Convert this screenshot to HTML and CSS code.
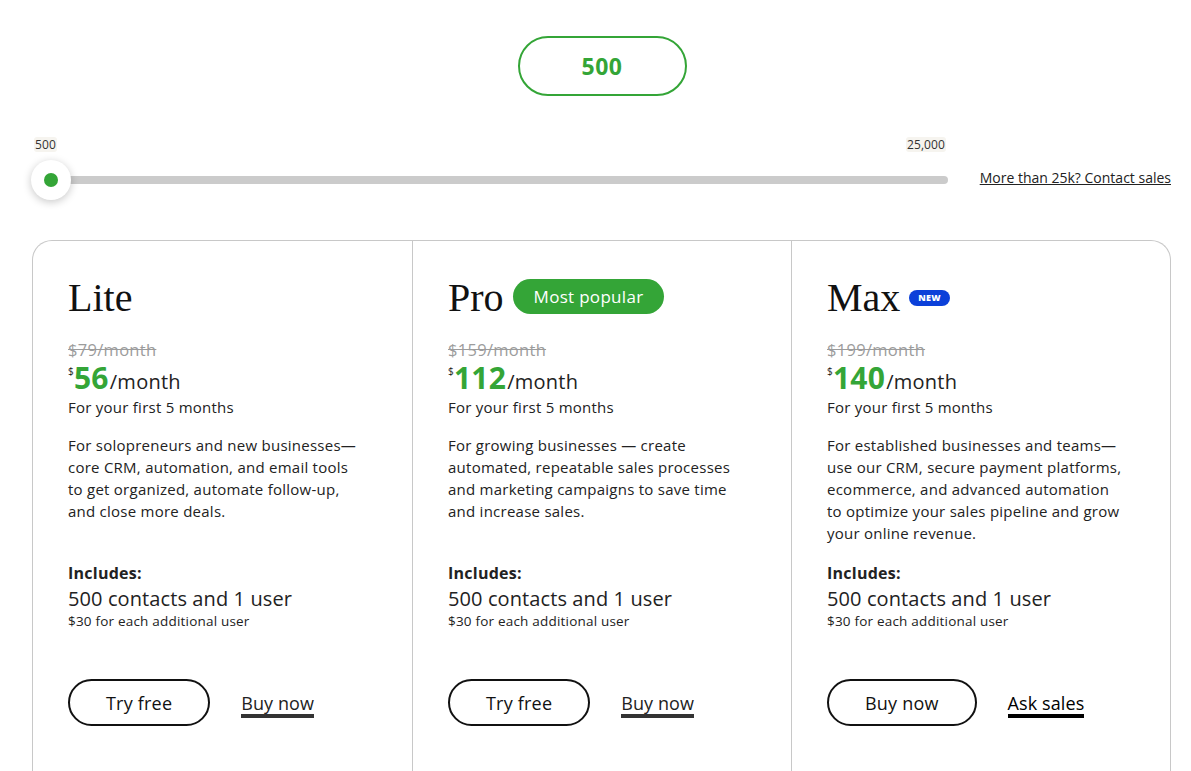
FILE: index.html
```html
<!doctype html>
<html>
<head>
  <meta charset="utf-8">
  <link rel="stylesheet" href="styles.css">
</head>
<body>
  <div class="page">
    <div class="countWrap">
      <div class="count">500</div>
    </div>

    <div class="sliderRow">
      <div class="slider">
        <div class="ends">
          <span class="endLabel">500</span>
          <span class="endLabel">25,000</span>
        </div>
        <div class="track">
          <div class="knob"><span class="dot"></span></div>
        </div>
      </div>
      <a href="#" class="contact">More than 25k? Contact sales</a>
    </div>

    <div class="plans">
      <div class="plan">
        <div class="titleRow"><h2 class="name">Lite</h2></div>
        <div class="oldPrice">$79/month</div>
        <div class="price"><sup>$</sup><b>56</b>/month</div>
        <div class="note">For your first 5 months</div>
        <p class="desc">For solopreneurs and new businesses—<br>core CRM, automation, and email tools<br>to get organized, automate follow-up,<br>and close more deals.</p>
        <div class="incTitle">Includes:</div>
        <div class="incMain">500 contacts and 1 user</div>
        <div class="incSub">$30 for each additional user</div>
        <div class="actions">
          <a href="#" class="btn">Try free</a>
          <a href="#" class="textLink">Buy now</a>
        </div>
      </div>

      <div class="plan">
        <div class="titleRow"><h2 class="name">Pro</h2><span class="popular">Most popular</span></div>
        <div class="oldPrice">$159/month</div>
        <div class="price"><sup>$</sup><b>112</b>/month</div>
        <div class="note">For your first 5 months</div>
        <p class="desc">For growing businesses — create<br>automated, repeatable sales processes<br>and marketing campaigns to save time<br>and increase sales.</p>
        <div class="incTitle">Includes:</div>
        <div class="incMain">500 contacts and 1 user</div>
        <div class="incSub">$30 for each additional user</div>
        <div class="actions">
          <a href="#" class="btn">Try free</a>
          <a href="#" class="textLink">Buy now</a>
        </div>
      </div>

      <div class="plan">
        <div class="titleRow"><h2 class="name">Max</h2><span class="new">NEW</span></div>
        <div class="oldPrice">$199/month</div>
        <div class="price"><sup>$</sup><b>140</b>/month</div>
        <div class="note">For your first 5 months</div>
        <p class="desc">For established businesses and teams—<br>use our CRM, secure payment platforms,<br>ecommerce, and advanced automation<br>to optimize your sales pipeline and grow<br>your online revenue.</p>
        <div class="incTitle">Includes:</div>
        <div class="incMain">500 contacts and 1 user</div>
        <div class="incSub">$30 for each additional user</div>
        <div class="actions">
          <a href="#" class="btn">Buy now</a>
          <a href="#" class="textLink dark">Ask sales</a>
        </div>
      </div>
    </div>
  </div>
</body>
</html>
```

FILE: styles.css
```css
body{
  margin: 0;
  background: #fff;
  color: #222;
  font-family: "Open Sans", "Noto Sans", sans-serif;
  letter-spacing: 0.25px;
}
.page{
  padding: 36px 20px 0 32px;
}
.countWrap{
  display: flex;
  justify-content: center;
  padding-left: 1px;
}
.count{
  width: 165px;
  height: 56px;
  border: 2px solid #34a537;
  border-radius: 30px;
  display: flex;
  align-items: center;
  justify-content: center;
  color: #34a537;
  font-size: 23px;
  font-weight: 700;
  letter-spacing: 0.5px;
}
.sliderRow{
  display: flex;
  align-items: flex-end;
  margin-top: 41px;
}
.slider{
  width: 916px;
}
.ends{
  display: flex;
  justify-content: space-between;
  padding: 0 2px 0 2px;
}
.endLabel{
  background: #f6f4ef;
  border-radius: 3px;
  font-size: 12px;
  line-height: 15px;
  color: #333;
  padding: 0 1px;
  letter-spacing: 0.1px;
}
.track{
  position: relative;
  height: 8px;
  margin-top: 24px;
  margin-left: 14px;
  background: #cbcbcb;
  border-radius: 4px;
}
.knob{
  position: absolute;
  left: -15px;
  top: -16px;
  width: 40px;
  height: 40px;
  border-radius: 50%;
  background: #fff;
  box-shadow: 0 2px 8px rgba(0,0,0,0.22);
  display: flex;
  align-items: center;
  justify-content: center;
}
.dot{
  width: 14px;
  height: 14px;
  border-radius: 50%;
  background: #34a537;
}
.contact{
  margin-left: auto;
  font-size: 14px;
  line-height: 18px;
  color: #222;
  text-decoration: underline;
  margin-bottom: -3px;
  letter-spacing: 0;
}
.plans{
  margin-top: 56px;
  display: grid;
  grid-template-columns: 1fr 1fr 1fr;
  border: 1px solid #c8c8c8;
  border-bottom: none;
  border-radius: 20px 20px 0 0;
  height: 540px;
}
.plan{
  padding: 32px 20px 0 35px;
  border-left: 1px solid #c8c8c8;
}
.plan:first-child{
  border-left: none;
}
.titleRow{
  display: flex;
  align-items: center;
  gap: 9px;
  height: 48px;
}
.name{
  margin: 0;
  font-family: "Liberation Serif", serif;
  font-weight: 400;
  font-size: 40px;
  color: #111;
  letter-spacing: 0;
}
.popular{
  background: #34a537;
  color: #fff;
  font-size: 17px;
  padding: 0 21px;
  height: 35px;
  line-height: 35px;
  border-radius: 18px;
  margin-top: -2px;
  letter-spacing: 0.3px;
}
.new{
  background: #0b40d9;
  color: #fff;
  font-size: 9px;
  font-weight: 800;
  padding: 0 9px;
  height: 16px;
  line-height: 16px;
  border-radius: 8px;
  margin-top: 2px;
}
.oldPrice{
  margin-top: 19px;
  font-size: 16.5px;
  line-height: 20px;
  color: #9c9c9c;
  text-decoration: line-through;
  letter-spacing: 0.3px;
}
.price{
  font-size: 20px;
  line-height: 30px;
  margin-top: 3px;
  display: flex;
  align-items: baseline;
}
.price sup{
  font-size: 10px;
  line-height: 12px;
  align-self: flex-start;
  margin-top: 2px;
}
.price b{
  font-size: 30px;
  line-height: 30px;
  color: #34a537;
  font-weight: 700;
  margin-right: 1px;
}
.note{
  font-size: 15px;
  line-height: 22px;
  margin-top: -1px;
}
.desc{
  margin: 16px 0 0;
  font-size: 15px;
  line-height: 22px;
  min-height: 128px;
}
.incTitle{
  font-size: 16px;
  font-weight: 700;
  line-height: 22px;
}
.incMain{
  font-size: 20px;
  line-height: 26px;
  margin-top: 2px;
  letter-spacing: 0.1px;
}
.incSub{
  font-size: 13.5px;
  line-height: 18px;
  letter-spacing: 0.2px;
}
.actions{
  margin-top: 49px;
  display: flex;
  align-items: center;
  gap: 31px;
}
.btn{
  box-sizing: border-box;
  height: 47px;
  padding: 0 36px;
  border: 2.5px solid #111;
  border-radius: 24px;
  display: flex;
  align-items: center;
  color: #111;
  text-decoration: none;
  font-size: 18px;
  letter-spacing: 0.2px;
}
.textLink{
  font-size: 18px;
  color: #222;
  text-decoration: none;
  border-bottom: 4px solid #333;
  line-height: 22px;
  margin-top: 4px;
  letter-spacing: 0.1px;
}
.textLink.dark{
  border-bottom-color: #000;
  color: #000;
}
```
